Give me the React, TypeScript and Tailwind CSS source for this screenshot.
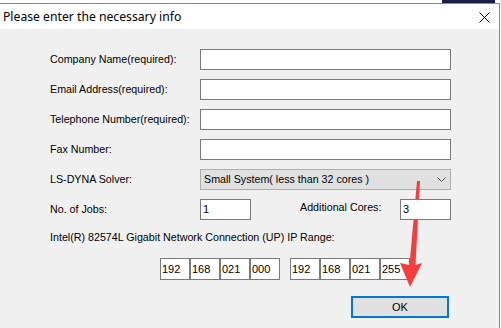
import React from "react";

const lbl = "text-[10.7px] text-black leading-none whitespace-nowrap";
const inp = "h-[21px] bg-white border border-[#7a7a7a]";

function IpBox({ v }: { v: string }) {
  return (
    <div className="w-[30px] h-[22px] bg-white border border-[#7a7a7a] flex items-center pl-[1px] text-[11px] leading-none text-black">
      {v}
    </div>
  );
}

export default function App() {
  return (
    <div
      className="relative w-[501px] h-[328px] bg-white overflow-hidden"
      style={{ fontFamily: '"Liberation Sans", Arial, sans-serif' }}
    >
      <div className="h-[3px] flex justify-end pr-[6px]">
        <div className="w-[53px] h-[3px] bg-[#1c1c4c]" />
      </div>
      <div className="w-[500px] h-[325px] border-t border-r border-[#8a8a8a] flex flex-col">
        <div className="h-[25px] bg-white flex items-center justify-between pl-[3px] pr-[9px]">
          <span
            className="text-[12.2px] text-black leading-none pt-[1px]"
            style={{ fontFamily: '"Noto Sans", "Open Sans", sans-serif' }}
          >
            Please enter the necessary info
          </span>
          <svg width="11" height="11" viewBox="0 0 11 11" className="mt-[1px]">
            <path d="M0.5 0.5 L10.5 10.5 M10.5 0.5 L0.5 10.5" stroke="#000" strokeWidth="1" />
          </svg>
        </div>
        <div className="flex-1 bg-[#f0f0f0] pl-[50px] pt-[20px] flex flex-col">
          {[
            "Company Name(required):",
            "Email Address(required):",
            "Telephone Number(required):",
            "Fax Number:",
          ].map((t) => (
            <div key={t} className="flex items-center h-[21px] mb-[9px]">
              <div className={`w-[150px] ${lbl}`}>{t}</div>
              <div className={`w-[251px] ${inp}`} />
            </div>
          ))}
          <div className="flex items-center h-[21px] mb-[9px]">
            <div className={`w-[150px] ${lbl}`}>LS-DYNA Solver:</div>
            <div className="w-[251px] h-[21px] bg-[#e1e1e1] border border-[#adadad] flex items-center justify-between pl-[3px] pr-[4px]">
              <span className={lbl}>Small System( less than 32 cores )</span>
              <svg width="9" height="6" viewBox="0 0 9 6">
                <path d="M0.5 0.5 L4.5 4.5 L8.5 0.5" stroke="#555" strokeWidth="1" fill="none" />
              </svg>
            </div>
          </div>
          <div className="flex items-center h-[21px]">
            <div className={`w-[150px] ${lbl}`}>No. of Jobs:</div>
            <div className={`w-[51px] ${inp} flex items-center pl-[2px] text-[11px] leading-none`}>1</div>
            <div className={`ml-[49px] w-[100px] ${lbl} -mt-[4px]`}>Additional Cores:</div>
            <div className={`relative z-20 w-[51px] ${inp} flex items-center pl-[2px] text-[11px] leading-none`}>3</div>
          </div>
          <div className={`mt-[11px] h-[12px] flex items-center ${lbl}`}>
            Intel(R) 82574L Gigabit Network Connection (UP) IP Range:
          </div>
          <div className="flex mt-[15px] pl-[110px]">
            <IpBox v="192" />
            <IpBox v="168" />
            <IpBox v="021" />
            <IpBox v="000" />
            <div className="w-[10px]" />
            <IpBox v="192" />
            <IpBox v="168" />
            <IpBox v="021" />
            <IpBox v="255" />
          </div>
          <div className="flex mt-[16px] pl-[301px]">
            <div className="w-[98px] h-[22px] bg-[#e1e1e1] border-2 border-[#0078d7] flex items-center justify-center text-[11px] leading-none text-black">
              OK
            </div>
          </div>
        </div>
      </div>
      <svg
        className="absolute left-0 top-0 z-10 pointer-events-none"
        width="501"
        height="328"
        viewBox="0 0 501 328"
      >
        <polygon
          points="417,181 420,181 415.5,265 422,263 410,287 400,263 409.5,265"
          fill="#f63c3c"
        />
      </svg>
    </div>
  );
}
